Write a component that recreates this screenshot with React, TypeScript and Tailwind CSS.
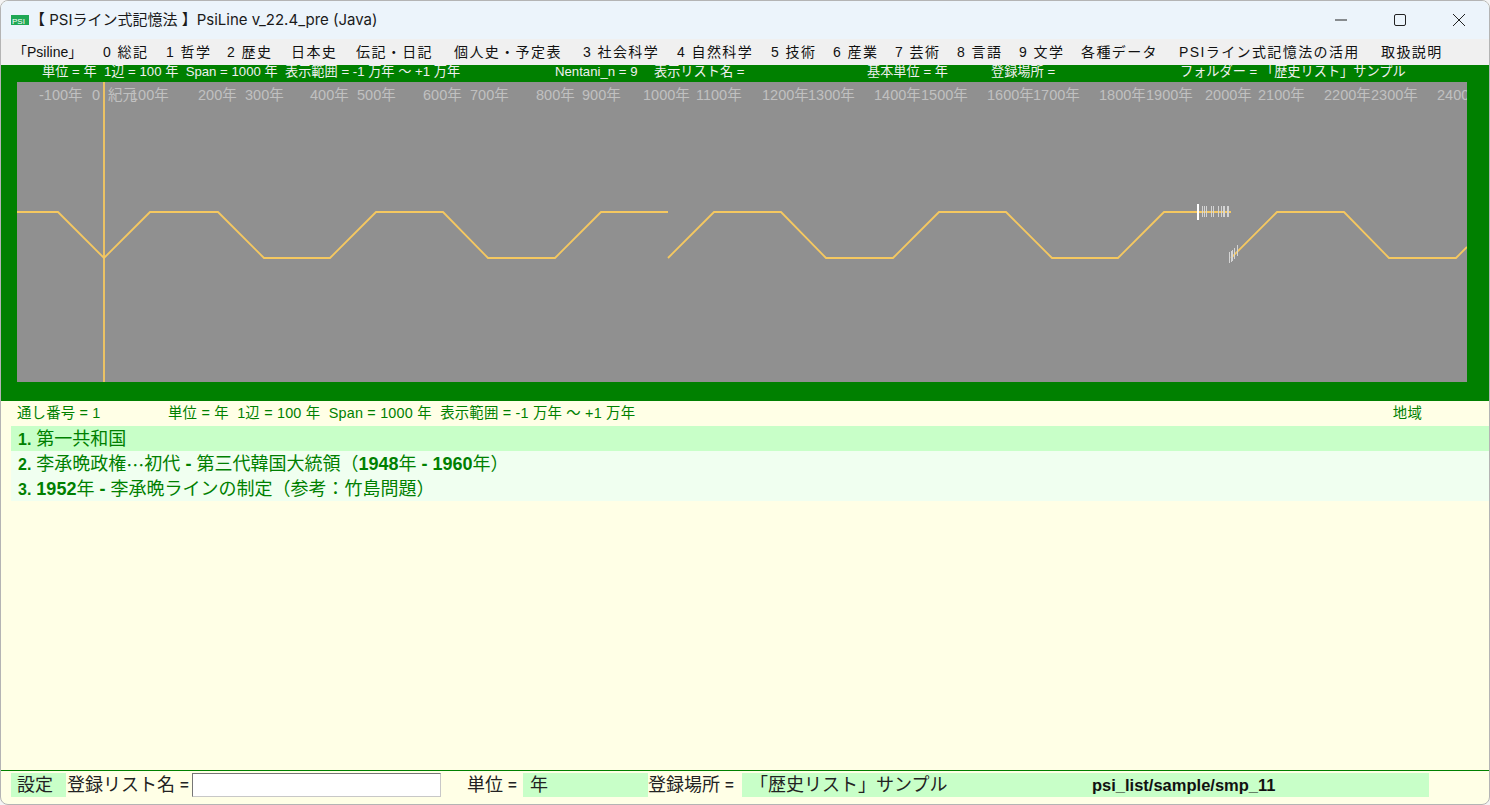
import React from "react";

const FONT = "font-['Liberation_Sans','Noto_Sans_CJK_JP',sans-serif]";

const menu: [string, string][] = [
  ["「Psiline」", "w-[90px] -ml-[3px] tracking-normal"],
  ["0 総記", "w-[63px]"],
  ["1 哲学", "w-[61px]"],
  ["2 歴史", "w-[64px]"],
  ["日本史", "w-[65px]"],
  ["伝記・日記", "w-[98px]"],
  ["個人史・予定表", "w-[129px]"],
  ["3 社会科学", "w-[94px]"],
  ["4 自然科学", "w-[94px]"],
  ["5 技術", "w-[62px]"],
  ["6 産業", "w-[62px]"],
  ["7 芸術", "w-[62px]"],
  ["8 言語", "w-[62px]"],
  ["9 文学", "w-[62px]"],
  ["各種データ", "w-[98px]"],
  ["PSIライン式記憶法の活用", "w-[202px]"],
  ["取扱説明", "w-[70px]"],
];

const ticks: [string, number][] = [
  ["-100年", 22], ["0", 75], ["紀元", 91], ["100年", 113], ["200年", 181], ["300年", 228],
  ["400年", 293], ["500年", 340], ["600年", 406], ["700年", 453], ["800年", 519], ["900年", 565],
  ["1000年", 626], ["1100年", 679], ["1200年", 745], ["1300年", 791], ["1400年", 857], ["1500年", 904],
  ["1600年", 970], ["1700年", 1016], ["1800年", 1082], ["1900年", 1129], ["2000年", 1188], ["2100年", 1241],
  ["2200年", 1307], ["2300年", 1354], ["2400", 1420],
];

const seg1 = "0,130 41,130 87,176 133,130 201,130 247,176 313,176 359,130 426,130 471,176 538,176 584,130 651,130";
const seg2 = "651,176 697,130 764,130 809,176 876,176 922,130 989,130 1035,176 1101,176 1147,130 1214,130";
const seg3 = "1214,176 1260,130 1327,130 1372,176 1439,176 1450,165";

function Chart() {
  return (
    <div className="relative h-[300px] w-[1450px] ml-[16px] bg-[#909090] overflow-hidden">
      {ticks.map(([t, x]) => (
        <span key={t} className="absolute top-[4px] text-[14.5px] leading-[18px] whitespace-nowrap text-[#c0c0c0]" style={{ left: x }}>
          {t}
        </span>
      ))}
      <svg className="absolute inset-0" width="1450" height="300" viewBox="0 0 1450 300">
        <g fill="none" stroke="#f5c860" strokeWidth="1.8">
          <polyline points={seg1} />
          <polyline points={seg2} />
          <polyline points={seg3} />
        </g>
        <line x1="87" y1="0" x2="87" y2="300" stroke="#f5c860" strokeWidth="1.8" />
        <line x1="1181" y1="122" x2="1181" y2="138" stroke="#ffffff" strokeWidth="2" />
        <g stroke="#d4d4d4" strokeWidth="1">
          {[1185.5, 1187.5, 1189.5, 1194.5, 1196.5, 1201.5, 1204.5, 1206.5, 1207.5, 1210.5, 1211.5].map((x) => (
            <line key={x} x1={x} y1="124" x2={x} y2="135" />
          ))}
        </g>
        <g stroke="#d4d4d4" strokeWidth="1">
          <line x1="1212.5" y1="170" x2="1212.5" y2="181" />
          <line x1="1214.5" y1="169" x2="1214.5" y2="180" />
          <line x1="1215.5" y1="168" x2="1215.5" y2="179" />
          <line x1="1217.5" y1="166" x2="1217.5" y2="177" />
          <line x1="1220.5" y1="163" x2="1220.5" y2="174" />
        </g>
      </svg>
    </div>
  );
}

export default function App() {
  return (
    <div className={`${FONT} w-[1490px] h-[805px] overflow-hidden bg-[#f4f4f4]`}>
      <div className="h-full flex flex-col rounded-[8px] overflow-hidden border border-[#b4b4b4] bg-[#ffffe6]">
        {/* Title bar */}
        <div className="h-[38px] shrink-0 flex items-center bg-[#ecf4fb] pl-[10px]">
          <svg width="18" height="10" viewBox="0 0 18 10" className="shrink-0">
            <rect width="18" height="10" fill="#1fa855" />
            <text x="1" y="8.5" fontSize="8" fill="#ffffff" fontFamily="Liberation Sans">PSI</text>
          </svg>
          <span className="ml-[1px] text-[15px] leading-[20px] text-[#1a1a1a] whitespace-nowrap font-['Inter','Noto_Sans_CJK_JP',sans-serif]">【 PSIライン式記憶法 】PsiLine v_22.4_pre (Java)</span>
          <div className="ml-auto flex items-center h-full">
            <div className="w-[59px] flex justify-center">
              <svg width="12" height="12" viewBox="0 0 12 12"><line x1="0" y1="6" x2="12" y2="6" stroke="#222" /></svg>
            </div>
            <div className="w-[59px] flex justify-center">
              <svg width="12" height="12" viewBox="0 0 12 12" fill="none"><rect x="0.5" y="0.5" width="11" height="11" rx="1.5" stroke="#222" /></svg>
            </div>
            <div className="w-[60px] flex justify-center">
              <svg width="12" height="12" viewBox="0 0 12 12" stroke="#222"><line x1="0" y1="0" x2="12" y2="12" /><line x1="12" y1="0" x2="0" y2="12" /></svg>
            </div>
          </div>
        </div>
        {/* Menu */}
        <div className="h-[26px] shrink-0 flex items-center bg-[#f0f0f0] pl-[15px] text-[14px] tracking-[1.4px] text-[#111]">
          {menu.map(([m, w]) => (
            <span key={m} className={`${w} shrink-0 whitespace-nowrap`}>{m}</span>
          ))}
        </div>
        {/* Green panel */}
        <div className="h-[336px] shrink-0 bg-[#008000]">
          <div className="h-[17px] flex items-start text-[13.2px] leading-[13px] text-[#f0f0f0] whitespace-nowrap pl-[41px]">
            <span className="w-[513px] shrink-0">単位 = 年&nbsp;&nbsp;1辺 = 100 年&nbsp;&nbsp;Span = 1000 年&nbsp;&nbsp;表示範囲 = -1 万年 ～ +1 万年</span>
            <span className="w-[99px] shrink-0">Nentani_n = 9</span>
            <span className="w-[213px] shrink-0">表示リスト名 =</span>
            <span className="w-[124px] shrink-0">基本単位 = 年</span>
            <span className="w-[189px] shrink-0">登録場所 =</span>
            <span>フォルダー = 「歴史リスト」サンプル</span>
          </div>
          <Chart />
        </div>
        {/* Info strip */}
        <div className="h-[25px] shrink-0 flex items-center pl-[16px] pr-[67px] text-[14.4px] tracking-[0.2px] text-[#008000] whitespace-nowrap">
          <span className="w-[151px] shrink-0">通し番号 = 1</span>
          <span>単位 = 年&nbsp;&nbsp;1辺 = 100 年&nbsp;&nbsp;Span = 1000 年&nbsp;&nbsp;表示範囲 = -1 万年 ～ +1 万年</span>
          <span className="ml-auto">地域</span>
        </div>
        {/* Rows */}
        <div className="pl-[10px] shrink-0 text-[18px] leading-[23px] text-[#008000] whitespace-nowrap">
          <div className="h-[25px] flex items-center pt-[2px] pl-[7px] bg-[#c8ffc8]"><b className="text-[16px]">1.</b>&nbsp;第一共和国</div>
          <div className="h-[25px] flex items-center pt-[2px] pl-[7px] bg-[#f0fff0]"><b className="text-[16px]">2.</b>&nbsp;李承晩政権<span className="font-['Noto_Sans_CJK_JP',sans-serif]">…</span>初代&nbsp;<b className="text-[18px]">-</b>&nbsp;第三代韓国大統領（<b className="text-[18px]">1948</b>年&nbsp;<b className="text-[18px]">-</b>&nbsp;<b className="text-[18px]">1960</b>年）</div>
          <div className="h-[25px] flex items-center pt-[2px] pl-[7px] bg-[#f0fff0]"><b className="text-[16px]">3.</b>&nbsp;<b className="text-[18px]">1952</b>年&nbsp;<b className="text-[18px]">-</b>&nbsp;李承晩ラインの制定（参考：竹島問題）</div>
        </div>
        <div className="flex-1" />
        {/* Bottom bar */}
        <div className="h-[34px] shrink-0 border-t border-[#008000] flex items-start pt-[2px] pl-[10px] text-[18px] leading-[24px] text-[#222] whitespace-nowrap">
          <span className="w-[55px] h-[24px] flex items-center pl-[6px] bg-[#c8ffc8] shrink-0">設定</span>
          <span className="w-[125px] h-[24px] flex items-center shrink-0 ml-[1px]">登録リスト名&nbsp;<b className="text-[15px]">=</b></span>
          <input readOnly className="w-[249px] h-[24px] shrink-0 bg-white border border-[#c8c8c8] border-t-[#767676] border-l-[#767676]" />
          <span className="ml-[26px] w-[56px] h-[24px] flex items-center shrink-0">単位&nbsp;<b className="text-[15px]">=</b></span>
          <span className="w-[125px] h-[24px] flex items-center pl-[7px] bg-[#c8ffc8] shrink-0">年</span>
          <span className="w-[94px] h-[24px] flex items-center shrink-0">登録場所&nbsp;<b className="text-[15px]">=</b></span>
          <div className="w-[687px] h-[24px] flex items-center pl-[8px] bg-[#c8ffc8] shrink-0">
            <span className="w-[342px] shrink-0">「歴史リスト」サンプル</span>
            <span className="font-bold text-[16.5px] text-[#111]">psi_list/sample/smp_11</span>
          </div>
        </div>
      </div>
    </div>
  );
}
